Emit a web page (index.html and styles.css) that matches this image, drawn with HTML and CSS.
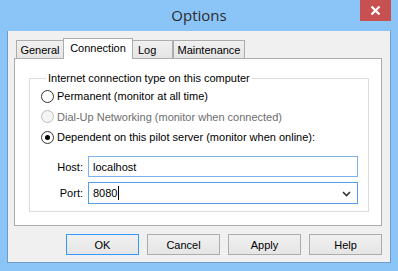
FILE: index.html
```html
<!DOCTYPE html>
<html lang="en">
<head>
    <meta charset="UTF-8">
    <title>Options</title>
    <link rel="stylesheet" href="styles.css">
</head>
<body>
    <div class="window">
        <div class="titlebar">
            <span class="title">Options</span>
            <div class="close">
                <svg width="11" height="9" viewBox="0 0 11 9">
                    <path d="M1.5 0.5 L9.5 8.5 M9.5 0.5 L1.5 8.5" stroke="#fff" stroke-width="2.2"/>
                </svg>
            </div>
        </div>

        <div class="client">
            <div class="tabs">
                <div class="tab tab-general">General</div>
                <div class="tab tab-connection active">Connection</div>
                <div class="tab tab-log">Log</div>
                <div class="tab tab-maint">Maintenance</div>
            </div>

            <div class="panel">
                <fieldset class="group">
                    <legend>Internet connection type on this computer</legend>

                    <div class="radio first">
                        <span class="circle"></span>
                        <span>Permanent (monitor at all time)</span>
                    </div>
                    <div class="radio disabled">
                        <span class="circle"></span>
                        <span>Dial-Up Networking (monitor when connected)</span>
                    </div>
                    <div class="radio checked">
                        <span class="circle"></span>
                        <span>Dependent on this pilot server (monitor when online):</span>
                    </div>

                    <div class="field host">
                        <span class="label">Host:</span>
                        <div class="input">localhost</div>
                    </div>
                    <div class="field">
                        <span class="label">Port:</span>
                        <div class="input combo">
                            <span>8080</span><span class="caret"></span>
                            <svg class="arrow" width="9" height="6" viewBox="0 0 9 6">
                                <path d="M1 1 L4.5 4.5 L8 1" fill="none" stroke="#333" stroke-width="1.6"/>
                            </svg>
                        </div>
                    </div>
                </fieldset>
            </div>

            <div class="buttons">
                <div class="btn default">OK</div>
                <div class="btn">Cancel</div>
                <div class="btn">Apply</div>
                <div class="btn">Help</div>
            </div>
        </div>
    </div>
</body>
</html>
```

FILE: styles.css
```css
body {
    margin: 0;
    font-family: "Liberation Sans", Arial, sans-serif;
    font-size: 11px;
    color: #000;
}

.window {
    width: 398px;
    height: 271px;
    background: #8bc4f6;
    box-sizing: border-box;
    padding: 0 7px 8px 7px;
    display: flex;
    flex-direction: column;
}

.titlebar {
    height: 31px;
    position: relative;
    display: flex;
    align-items: center;
    justify-content: center;
}

.title {
    font-family: "Open Sans", sans-serif;
    font-size: 15px;
    color: #2b2b2b;
    margin-top: -2px;
}

.close {
    position: absolute;
    top: 0;
    right: 0;
    width: 31px;
    height: 21px;
    background: #c75050;
    display: flex;
    align-items: center;
    justify-content: center;
}

.client {
    flex: 1;
    background: #f0f0f0;
    border: 1px solid #6f9bc8;
    border-top: none;
    padding: 7px 8px 0 6px;
}

.tabs {
    display: flex;
    align-items: flex-end;
    height: 20px;
    padding-left: 2px;
    position: relative;
    z-index: 1;
}

.tab {
    box-sizing: border-box;
    height: 18px;
    border: 1px solid #acacac;
    border-bottom: none;
    background: linear-gradient(#f0f0f0, #e5e5e5);
    display: flex;
    align-items: center;
    justify-content: center;
    padding-top: 1px;
}

.tab-general { width: 48px; }
.tab-log { width: 41px; margin-left: -1px; justify-content: flex-start; padding-left: 5px; }
.tab-maint { width: 72px; margin-left: 0; }

.tab.active {
    width: 70px;
    height: 21px;
    margin-left: -1px;
    margin-bottom: -1px;
    background: #fff;
    padding-top: 0;
    padding-bottom: 3px;
}

.panel {
    height: 168px;
    box-sizing: border-box;
    background: #fff;
    border: 1px solid #acacac;
    padding: 13px 12px 0 14px;
}

.group {
    margin: 0;
    border: 1px solid #dcdcdc;
    padding: 0 0 0 11px;
    height: 140px;
    box-sizing: border-box;
}

.group legend {
    padding: 0 2px;
    margin-left: 5px;
}

.radio {
    display: flex;
    align-items: center;
    height: 20px;
    gap: 3px;
}

.radio.first {
    margin-top: 2px;
}

.radio.disabled {
    height: 21px;
    color: #6d6d6d;
}

.circle {
    width: 11px;
    height: 11px;
    border: 1px solid #333;
    border-radius: 50%;
    background: #fff;
    position: relative;
}

.radio.disabled .circle {
    border-color: #bcbcbc;
    background: #f4f4f4;
}

.radio.checked .circle::after {
    content: "";
    position: absolute;
    left: 3px;
    top: 3px;
    width: 5px;
    height: 5px;
    border-radius: 50%;
    background: #000;
}

.field {
    display: flex;
    align-items: center;
    margin-top: 5px;
}

.field.host {
    margin-top: 9px;
}

.label {
    width: 42px;
    text-align: right;
    margin-right: 5px;
}

.input {
    box-sizing: border-box;
    width: 270px;
    height: 21px;
    border: 1px solid #7eb4ea;
    padding-left: 4px;
    display: flex;
    align-items: center;
}

.combo {
    height: 22px;
    border-color: #569de5;
    position: relative;
}

.caret {
    width: 1px;
    height: 14px;
    background: #000;
    margin-left: 1px;
}

.arrow {
    position: absolute;
    right: 6px;
    top: 8px;
}

.buttons {
    display: flex;
    justify-content: flex-end;
    gap: 8px;
    margin-top: 8px;
}

.btn {
    box-sizing: border-box;
    width: 73px;
    height: 21px;
    border: 1px solid #acacac;
    background: linear-gradient(#f0f0f0, #e5e5e5);
    display: flex;
    align-items: center;
    justify-content: center;
}

.btn.default {
    border-color: #3399ff;
}
```
